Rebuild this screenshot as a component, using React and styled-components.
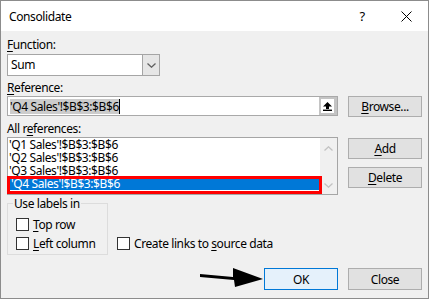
import React from "react";
import styled, { createGlobalStyle } from "styled-components";

const GlobalStyle = createGlobalStyle`
  html, body {
    margin: 0;
    padding: 0;
    background: #ffffff;
  }
  * {
    box-sizing: border-box;
  }
`;

const FONT = `"Noto Sans", "Open Sans", "Liberation Sans", sans-serif`;

const Window = styled.div`
  width: 429px;
  height: 299px;
  border: 1px solid #8c8c8c;
  background: #f0f0f0;
  display: flex;
  flex-direction: column;
  font-family: ${FONT};
  font-size: 12px;
  letter-spacing: -0.4px;
  color: #000;
`;

const TitleBar = styled.div`
  height: 30px;
  background: #ffffff;
  display: flex;
  align-items: center;
  padding-left: 8px;
  flex-shrink: 0;
`;

const Title = styled.div`
  flex: 1;
  line-height: 15px;
  margin-top: 1px;
`;

const TitleButton = styled.div`
  width: 44px;
  height: 30px;
  display: flex;
  align-items: center;
  justify-content: center;
  font-size: 13px;
`;

const Body = styled.div`
  flex: 1;
  display: flex;
  flex-direction: column;
  padding: 6px 6px 0 6px;
`;

const Row = styled.div`
  display: flex;
  gap: 10px;
  margin-top: ${(p) => p.$mt || 0}px;
  align-items: flex-start;
`;

const Main = styled.div`
  width: 331px;
  flex-shrink: 0;
  display: flex;
  flex-direction: ${(p) => (p.$row ? "row" : "column")};
  justify-content: ${(p) => p.$justify || "flex-start"};
  align-items: ${(p) => p.$align || "stretch"};
`;

const Side = styled.div`
  width: 74px;
  display: flex;
  flex-direction: column;
  gap: 8px;
  padding-top: ${(p) => p.$pt || 0}px;
`;

const Label = styled.div`
  line-height: 15px;
  margin-top: ${(p) => p.$mt || 0}px;
  margin-bottom: ${(p) => p.$mb || 0}px;
`;

const Key = styled.span`
  text-decoration: underline;
  text-underline-offset: 2px;
`;

const Combo = styled.div`
  width: 153px;
  height: 22px;
  border: 1px solid #a5a5a5;
  background: #ffffff;
  display: flex;
  align-items: stretch;
`;

const ComboValue = styled.div`
  flex: 1;
  padding-left: 3px;
  line-height: 20px;
`;

const ComboButton = styled.div`
  width: 17px;
  background: #e6e6e6;
  border-left: 1px solid #a5a5a5;
  display: flex;
  align-items: center;
  justify-content: center;
`;

const RefInput = styled.div`
  width: 331px;
  height: 20px;
  border: 1px solid #a9a9a9;
  background: #ffffff;
  display: flex;
  align-items: center;
  padding-left: 2px;
`;

const RefText = styled.div`
  flex: 1;
  display: flex;
  align-items: center;
`;

const Selected = styled.span`
  background: #cccccc;
  line-height: 15px;
`;

const Caret = styled.span`
  width: 1px;
  height: 15px;
  background: #000;
`;

const Collapse = styled.div`
  width: 18px;
  height: 18px;
  border: 2px solid #c4c4c4;
  border-right-width: 3px;
  background: #ffffff;
  display: flex;
  align-items: center;
  justify-content: center;
`;

const Button = styled.div`
  width: 74px;
  height: ${(p) => p.$h || 21}px;
  border: 1px solid ${(p) => (p.$default ? "#0078d7" : "#adadad")};
  background: ${(p) => (p.$default ? "#e5f1fb" : "#e1e1e1")};
  display: flex;
  align-items: center;
  justify-content: center;
  line-height: 15px;
`;

const ListBox = styled.div`
  position: relative;
  width: 331px;
  height: 58px;
  border: 1px solid #a5a5a5;
  background: #ffffff;
  display: flex;
`;

const Items = styled.div`
  flex: 1;
`;

const Item = styled.div`
  height: 13px;
  line-height: 13px;
  padding-left: ${(p) => (p.$selected ? 3 : 1)}px;
  white-space: nowrap;
  background: ${(p) => (p.$selected ? "#0078d7" : "transparent")};
  color: ${(p) => (p.$selected ? "#ffffff" : "#000")};
`;

const ScrollBar = styled.div`
  width: 17px;
  background: #f0f0f0;
  display: flex;
  flex-direction: column;
  justify-content: space-between;
  align-items: center;
  padding: 8px 0 6px;
`;

const Highlight = styled.div`
  position: absolute;
  left: -1px;
  top: 38px;
  width: 315px;
  height: 18px;
  border: 3px solid #ff0000;
  pointer-events: none;
`;

const Group = styled.fieldset`
  width: 101px;
  margin: 0;
  padding: 6px 8px 3px 8px;
  border: 1px solid #dcdcdc;
  display: flex;
  flex-direction: column;
  gap: 4px;
`;

const Legend = styled.legend`
  padding: 0 1px;
  margin-left: -3px;
  line-height: 15px;
`;

const CheckRow = styled.div`
  display: flex;
  align-items: center;
  gap: 4px;
  height: 15px;
  line-height: 15px;
  white-space: nowrap;
  margin-left: ${(p) => p.$ml || 0}px;
  margin-bottom: ${(p) => p.$mb || 0}px;
`;

const Box = styled.span`
  width: 13px;
  height: 13px;
  border: 1px solid #333333;
  background: #ffffff;
  flex-shrink: 0;
`;

const Arrow = styled.svg`
  display: block;
`;

const Chevron = ({ up, color = "#606060" }) => (
  <svg width="9" height="5" viewBox="0 0 9 5">
    <polyline
      points={up ? "0.5,4.5 4.5,0.8 8.5,4.5" : "0.5,0.5 4.5,4.2 8.5,0.5"}
      fill="none"
      stroke={color}
      strokeWidth="1.3"
    />
  </svg>
);

const refs = [
  "'Q1 Sales'!$B$3:$B$6",
  "'Q2 Sales'!$B$3:$B$6",
  "'Q3 Sales'!$B$3:$B$6",
  "'Q4 Sales'!$B$3:$B$6",
];

export default function App() {
  return (
    <>
      <GlobalStyle />
      <Window>
        <TitleBar>
          <Title>Consolidate</Title>
          <TitleButton>?</TitleButton>
          <TitleButton>
            <svg width="11" height="11" viewBox="0 0 11 11">
              <path d="M0.5 0.5 L10.5 10.5 M10.5 0.5 L0.5 10.5" stroke="#000" strokeWidth="1" />
            </svg>
          </TitleButton>
        </TitleBar>
        <Body>
          <Label $mb={2}>
            <Key>F</Key>unction:
          </Label>
          <Combo>
            <ComboValue>Sum</ComboValue>
            <ComboButton>
              <Chevron />
            </ComboButton>
          </Combo>
          <Label $mt={4} $mb={1}>
            <Key>R</Key>eference:
          </Label>
          <Row>
            <Main>
              <RefInput>
                <RefText>
                  <Selected>'Q4 Sales'!$B$3:$B$6</Selected>
                  <Caret />
                </RefText>
                <Collapse>
                  <svg width="9" height="9" viewBox="0 0 9 9">
                    <path d="M4.5 0 L9 4.5 L6 4.5 L6 7 L3 7 L3 4.5 L0 4.5 Z" fill="#000" />
                    <rect x="0" y="7.6" width="9" height="1.4" fill="#000" />
                  </svg>
                </Collapse>
              </RefInput>
            </Main>
            <Side>
              <Button>
                <span>
                  <Key>B</Key>rowse...
                </span>
              </Button>
            </Side>
          </Row>
          <Label $mt={4} $mb={1}>
            All r<Key>e</Key>ferences:
          </Label>
          <Row>
            <Main>
              <ListBox>
                <Items>
                  {refs.map((r, i) => (
                    <Item key={r} $selected={i === 3}>
                      {r}
                    </Item>
                  ))}
                </Items>
                <ScrollBar>
                  <Chevron up color="#c2c2c2" />
                  <Chevron color="#c2c2c2" />
                </ScrollBar>
                <Highlight />
              </ListBox>
            </Main>
            <Side $pt={1}>
              <Button>
                <span>
                  <Key>A</Key>dd
                </span>
              </Button>
              <Button>
                <span>
                  <Key>D</Key>elete
                </span>
              </Button>
            </Side>
          </Row>
          <Row $mt={1}>
            <Main $row $align="flex-end">
              <Group>
                <Legend>Use labels in</Legend>
                <CheckRow>
                  <Box />
                  <span>
                    <Key>T</Key>op row
                  </span>
                </CheckRow>
                <CheckRow>
                  <Box />
                  <span>
                    <Key>L</Key>eft column
                  </span>
                </CheckRow>
              </Group>
              <CheckRow $ml={9} $mb={4}>
                <Box />
                <span>
                  Create links to <Key>s</Key>ource data
                </span>
              </CheckRow>
            </Main>
          </Row>
          <Row $mt={13}>
            <Main $row $justify="flex-end" $align="center">
              <Arrow width="64" height="22" viewBox="0 0 64 22">
                <polygon points="0,6 33,9 33,0 63,11 35,19 34,12 0,9" fill="#000" />
              </Arrow>
              <Button $default $h={22}>OK</Button>
            </Main>
            <Side>
              <Button $h={22}>Close</Button>
            </Side>
          </Row>
        </Body>
      </Window>
    </>
  );
}
